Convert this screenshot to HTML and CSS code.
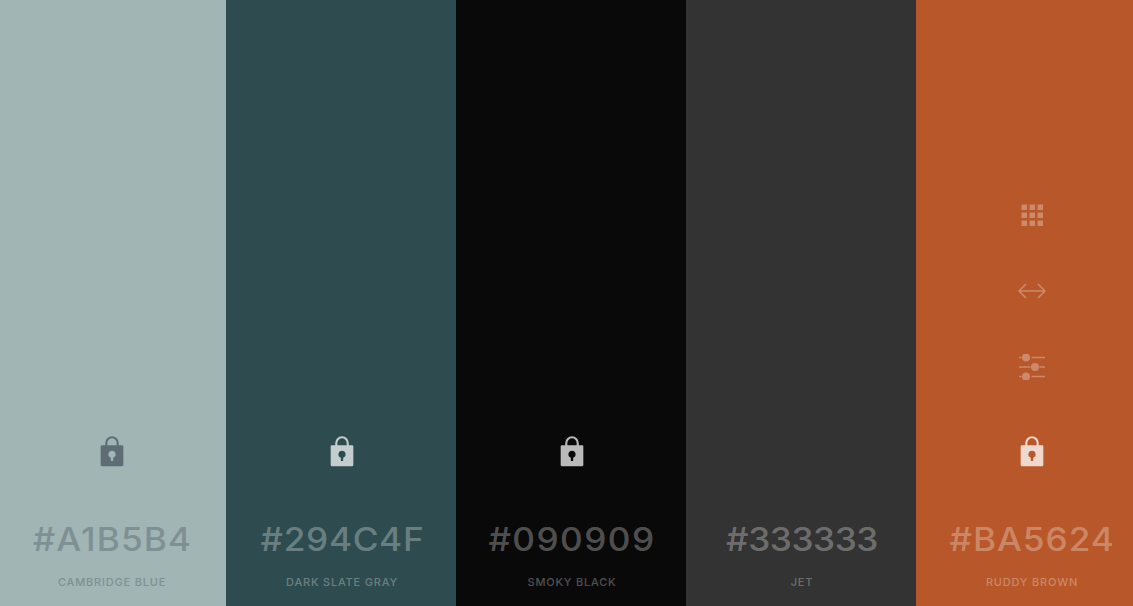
FILE: index.html
```html
<!DOCTYPE html>
<html lang="en">
<head>
<meta charset="utf-8">
<title>Palette</title>
<link rel="stylesheet" href="styles.css">
</head>
<body>
<svg class="defs" width="0" height="0" aria-hidden="true">
  <symbol id="lock" viewBox="0 0 24 32">
    <path fill-rule="evenodd" d="M1.5 9.500H5V7.200a7 7 0 0 1 14 0V9.500H22.500a1.200 1.200 0 0 1 1.200 1.200V30a1.200 1.200 0 0 1-1.200 1.200H1.500A1.200 1.200 0 0 1 .3 30V10.700A1.200 1.200 0 0 1 1.500 9.500ZM7.200 9.500H16.800V7.200a4.800 4.800 0 0 0-9.600 0ZM12 15.200a3.700 3.700 0 0 0-1.200 7.200V25.800h2.400V22.400A3.700 3.700 0 0 0 12 15.200Z"/>
  </symbol>
</svg>
<main class="palette">
  <section class="swatch swatch-cambridge">
    <svg class="lock"><use href="#lock"/></svg>
    <h2 class="hex">#A1B5B4</h2>
    <p class="name">CAMBRIDGE BLUE</p>
  </section>
  <section class="swatch swatch-slate">
    <svg class="lock"><use href="#lock"/></svg>
    <h2 class="hex">#294C4F</h2>
    <p class="name">DARK SLATE GRAY</p>
  </section>
  <section class="swatch swatch-smoky">
    <svg class="lock"><use href="#lock"/></svg>
    <h2 class="hex">#090909</h2>
    <p class="name">SMOKY BLACK</p>
  </section>
  <section class="swatch swatch-jet">
    <h2 class="hex">#333333</h2>
    <p class="name">JET</p>
  </section>
  <section class="swatch swatch-ruddy">
    <div class="tools">
      <svg class="tool tool-grid" viewBox="0 0 22 22">
        <rect x=".5" y=".5" width="5.500" height="5.500"/><rect x="8.500" y=".5" width="5.500" height="5.500"/><rect x="16.500" y=".5" width="5.500" height="5.500"/>
        <rect x=".5" y="8.500" width="5.500" height="5.500"/><rect x="8.500" y="8.500" width="5.500" height="5.500"/><rect x="16.500" y="8.500" width="5.500" height="5.500"/>
        <rect x=".5" y="16.500" width="5.500" height="5.500"/><rect x="8.500" y="16.500" width="5.500" height="5.500"/><rect x="16.500" y="16.500" width="5.500" height="5.500"/>
      </svg>
      <svg class="tool tool-arrows" viewBox="0 0 28 16">
        <path d="M8 1 1 8l7 7M20 1l7 7-7 7M1 8h26"/>
      </svg>
      <svg class="tool tool-sliders" viewBox="0 0 26 26">
        <path class="line" d="M0 3.500h2.500M12.500 3.500h13.500M0 13h11.500M20.500 13h5.500M0 22.500h2.500M12.500 22.500h13.500"/>
        <circle cx="7" cy="3.500" r="4"/><circle cx="16" cy="13" r="4"/><circle cx="7" cy="22.500" r="4"/>
      </svg>
    </div>
    <svg class="lock"><use href="#lock"/></svg>
    <h2 class="hex">#BA5624</h2>
    <p class="name">RUDDY BROWN</p>
  </section>
</main>
</body>
</html>
```
FILE: styles.css
```css
* { box-sizing: border-box; }
html, body { margin: 0; height: 100%; overflow: hidden; }
body { font-family: "Inter", "Liberation Sans", sans-serif; }
.defs { position: absolute; }
.palette { display: flex; height: 606px; margin-left: -4px; }
.swatch {
  flex: 0 0 230px;
  display: flex;
  flex-direction: column;
  align-items: center;
  justify-content: flex-end;
  padding: 0 0 16px 2px;
}
.swatch-cambridge { background: #a1b5b4; color: #7f9095; }
.swatch-cambridge .lock { fill: #5e6d75; }
.swatch-slate { background: #2e4c4f; color: rgba(255, 255, 255, .3); }
.swatch-smoky { background: #090909; color: rgba(255, 255, 255, .3); }
.swatch-jet { background: #333333; color: rgba(255, 255, 255, .3); }
.swatch-ruddy { background: #b85729; color: rgba(255, 255, 255, .3); }
.lock { width: 24px; height: 31px; fill: rgba(255, 255, 255, .72); margin-bottom: 53px; }
.swatch-ruddy .lock { fill: rgba(255, 255, 255, .77); }
.hex { margin: 0 0 14px; font-size: 32px; line-height: 40px; font-weight: 500; letter-spacing: 1px; transform: scaleX(1.1); }
.swatch-slate .hex { letter-spacing: .6px; }
.swatch-smoky .hex { letter-spacing: 1.3px; }
.swatch-jet .hex { letter-spacing: -.4px; }
.swatch-ruddy .hex { letter-spacing: .85px; }
.name { margin: 0; font-size: 11px; line-height: 16px; font-weight: 500; letter-spacing: .8px; }
.tools { display: flex; flex-direction: column; align-items: center; margin-bottom: 56.500px; opacity: .3; }
.tool { display: block; fill: #fff; }
.tool-grid { width: 22px; height: 22px; margin-bottom: 57px; }
.tool-arrows { width: 28px; height: 16px; fill: none; stroke: #fff; stroke-width: 1.500; margin-bottom: 54.500px; }
.tool-sliders { width: 26px; height: 26px; }
.tool-sliders .line { fill: none; stroke: #fff; stroke-width: 1.500; }
```
